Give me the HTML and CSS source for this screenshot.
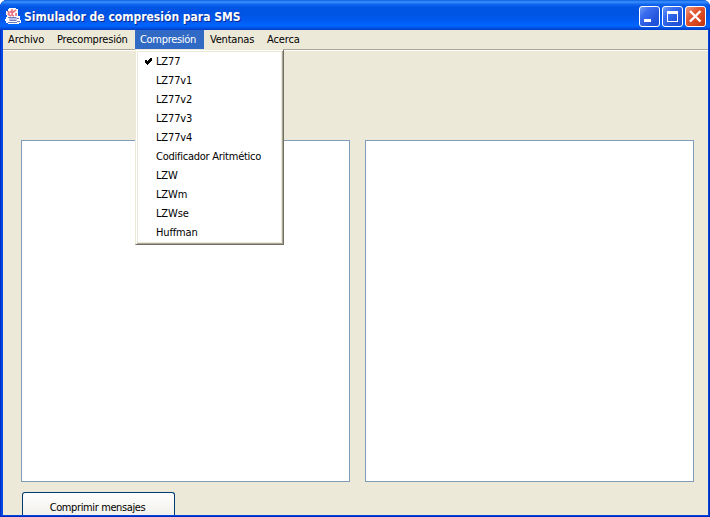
FILE: index.html
```html
<!DOCTYPE html>
<html lang="es">
<head>
<meta charset="utf-8">
<title>Simulador de compresión para SMS</title>
<link rel="stylesheet" href="styles.css">
</head>
<body>
<div class="window">
  <header class="titlebar">
    <svg class="java" width="17" height="17" viewBox="0 0 17 17">
      <path fill="#fff" d="M4 0h7v1h2v7h2v4h1v3h-2v1H3v-1H1v-2H0v-2h1V9h1V7H1V3h2V1h1z"/>
      <path fill="none" stroke="#ea7482" stroke-width="1.7" d="M7 1v2L3.500 5v1.500L6 8M11 2L7 5v2l2 1M3 3v1M11 5v3"/>
      <path fill="#b9bfe6" d="M4 9h8v4H4z"/>
      <path fill="none" stroke="#7079bb" d="M3 9.500h8M12 10.500h2M5 12.500h6M3 14.500h9M12 13.500h3"/>
    </svg>
    <h1>Simulador de compresión para SMS</h1>
    <div class="controls">
      <button class="ctl" aria-label="Minimizar"><svg width="21" height="21"><path fill="#fff" d="M5 13h7v3H5z"/></svg></button>
      <button class="ctl" aria-label="Maximizar"><svg width="21" height="21"><path fill="#fff" fill-rule="evenodd" d="M5 5h11v11H5zM6 8v7h9V8z"/></svg></button>
      <button class="ctl close" aria-label="Cerrar"><svg width="21" height="21"><path stroke="#fff" stroke-width="2.4" d="M5 5l10.5 10.5M15.500 5L5 15.500"/></svg></button>
    </div>
  </header>
  <div class="client">
    <nav class="menubar">
      <div class="menu archivo"><span>Archivo</span></div>
      <div class="menu pre"><span>Precompresión</span></div>
      <div class="menu open"><span>Compresión</span>
        <ul class="dropdown">
          <li><svg class="check" width="9" height="8"><path d="M1 3h2v1h1V3h1V2h1V1h2v3H7v1H6v1H5v1H4v1H3V7H2V6H1z"/></svg>LZ77</li>
          <li>LZ77v1</li>
          <li>LZ77v2</li>
          <li>LZ77v3</li>
          <li>LZ77v4</li>
          <li class="long">Codificador Aritmético</li>
          <li>LZW</li>
          <li>LZWm</li>
          <li>LZWse</li>
          <li>Huffman</li>
        </ul>
      </div>
      <div class="menu ventanas"><span>Ventanas</span></div>
      <div class="menu acerca"><span>Acerca</span></div>
    </nav>
    <main class="content">
      <div class="panels">
        <div class="panel"></div>
        <div class="panel"></div>
      </div>
      <button class="compress"><span>Comprimir mensajes</span></button>
    </main>
  </div>
</div>
</body>
</html>
```
FILE: styles.css
```css
* { box-sizing: border-box; }
body {
  margin: 0;
  background: #fff;
  font: 11px/19px "DejaVu Sans Condensed", "DejaVu Sans", sans-serif;
  font-stretch: condensed;
  color: #000;
}
.window {
  display: flex;
  flex-direction: column;
  width: 710px;
  height: 517px;
  padding: 0 2px 2px 3px;
  overflow: hidden;
  border-radius: 7px 7px 0 0;
  background: #0046e0;
  box-shadow: inset 1px 0 #0030c8, inset -1px -1px #0028b8;
}
.titlebar {
  display: flex;
  flex: none;
  align-items: center;
  height: 30px;
  margin: 0 -2px 0 -3px;
  padding: 2px 4px 0 5px;
  background: linear-gradient(#0a5fe0 0, #3b92ff 2px, #1468ef 4px, #0055e5 7px, #0054e3 14px, #005bf2 21px, #0066ff 26px, #0050e0 28px, #003dc8 30px);
}
.java { flex: none; margin: 0 2px 0 0; }
h1 {
  flex: 1;
  margin: 2px 0 0;
  font-size: 12px;
  font-weight: bold;
  white-space: nowrap;
  color: #fff;
  text-shadow: 1px 1px #0a2a90;
}
.controls { display: flex; gap: 2px; }
.ctl {
  width: 21px;
  height: 21px;
  padding: 0;
  border: 1px solid #fff;
  border-radius: 3px;
  background: linear-gradient(135deg, #6f9cf5 0, #3a6df0 30%, #2456dc 70%, #1a50d8 100%);
}
.ctl svg { display: block; margin: -1px; }
.close { background: linear-gradient(135deg, #ee9a80 0, #e35a35 35%, #d8431c 70%, #b83410 100%); }
.client {
  display: flex;
  flex-direction: column;
  flex: 1;
  background: #ece9d8;
}
.menubar {
  display: flex;
  flex: none;
  height: 21px;
  border-bottom: 1px solid #fff;
  box-shadow: inset 0 -1px #aca899;
}
.menu { height: 19px; padding-left: 6px; white-space: nowrap; letter-spacing: -0.2px; }
.archivo { width: 48px; padding-left: 5px; letter-spacing: -0.1px; }
.pre { width: 84px; }
.open {
  position: relative;
  width: 69px;
  padding-left: 5px;
  background: #316ac5;
  color: #fff;
  letter-spacing: -0.3px;
}
.ventanas { width: 57px; }
.acerca { letter-spacing: -0.1px; }
.dropdown {
  position: absolute;
  top: 19px;
  left: 0;
  width: 149px;
  height: 196px;
  margin: 0;
  padding: 2px 0 0;
  list-style: none;
  background: #fff;
  color: #000;
  letter-spacing: -0.15px;
  border: 1px solid #ece9d8;
  border-right-color: #716f64;
  border-bottom-color: #716f64;
  box-shadow: inset 1px 1px #fff, inset -1px -1px #aca899, inset 2px 2px #ece9d8, inset -2px -2px #ece9d8;
}
.dropdown li { position: relative; height: 19px; padding-left: 20px; }
.dropdown .long { letter-spacing: -0.25px; }
.check { position: absolute; left: 8px; top: 5px; }
.content { flex: 1; padding: 89px 14px 0 18px; }
.panels { display: flex; gap: 15px; }
.panel {
  width: 329px;
  height: 342px;
  border: 1px solid #7f9db9;
  background: #fff;
}
.compress {
  display: block;
  width: 153px;
  height: 23px;
  margin: 10px 0 0 1px;
  padding: 5px 2px 0 0;
  border: 1px solid #003c74;
  border-bottom: 0;
  border-radius: 3px 3px 0 0;
  background: linear-gradient(#fff, #f1f0eb);
  font: inherit;
  letter-spacing: -0.38px;
  color: #000;
}
```
